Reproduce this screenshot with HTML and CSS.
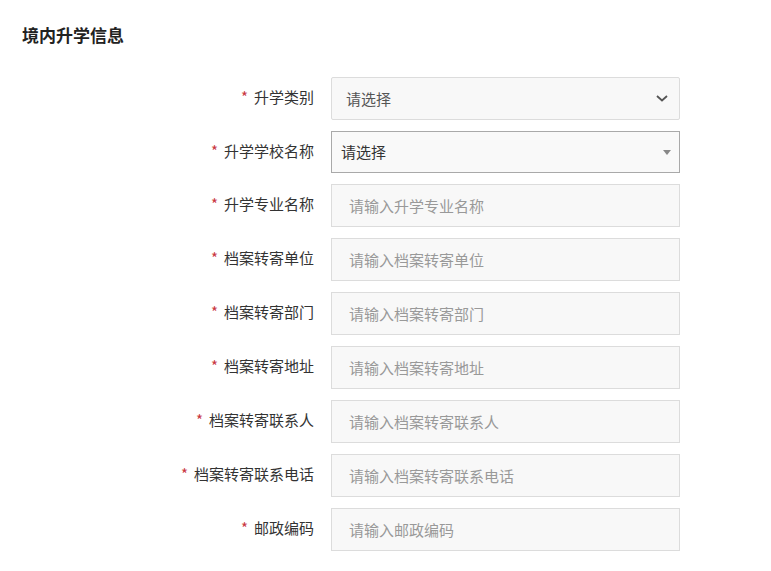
FILE: index.html
```
<!DOCTYPE html>
<html lang="zh-CN">
<head>
    <meta charset="UTF-8">
    <meta name="viewport" content="width=device-width, initial-scale=1.0">
    <title>境内升学信息</title>
    <link rel="stylesheet" href="styles.css">
</head>
<body>
    <div class="section">
        <h2 class="section-title">境内升学信息</h2>

        <form class="info-form">
            <div class="form-row">
                <label class="form-label"><span class="required">*</span>升学类别</label>
                <div class="field field-select">
                    <span class="field-value">请选择</span>
                    <svg class="chevron" width="12" height="7" viewBox="0 0 12 7">
                        <path d="M1 1 L6 5.5 L11 1" fill="none" stroke="#555" stroke-width="1.8"/>
                    </svg>
                </div>
            </div>

            <div class="form-row">
                <label class="form-label"><span class="required">*</span>升学学校名称</label>
                <div class="field field-combo">
                    <span class="field-value">请选择</span>
                    <span class="caret"></span>
                </div>
            </div>

            <div class="form-row">
                <label class="form-label"><span class="required">*</span>升学专业名称</label>
                <input class="field field-input" type="text" placeholder="请输入升学专业名称">
            </div>

            <div class="form-row">
                <label class="form-label"><span class="required">*</span>档案转寄单位</label>
                <input class="field field-input" type="text" placeholder="请输入档案转寄单位">
            </div>

            <div class="form-row">
                <label class="form-label"><span class="required">*</span>档案转寄部门</label>
                <input class="field field-input" type="text" placeholder="请输入档案转寄部门">
            </div>

            <div class="form-row">
                <label class="form-label"><span class="required">*</span>档案转寄地址</label>
                <input class="field field-input" type="text" placeholder="请输入档案转寄地址">
            </div>

            <div class="form-row">
                <label class="form-label"><span class="required">*</span>档案转寄联系人</label>
                <input class="field field-input" type="text" placeholder="请输入档案转寄联系人">
            </div>

            <div class="form-row">
                <label class="form-label"><span class="required">*</span>档案转寄联系电话</label>
                <input class="field field-input" type="text" placeholder="请输入档案转寄联系电话">
            </div>

            <div class="form-row">
                <label class="form-label"><span class="required">*</span>邮政编码</label>
                <input class="field field-input" type="text" placeholder="请输入邮政编码">
            </div>
        </form>
    </div>
</body>
</html>
```

FILE: styles.css
```
body {
    margin: 0;
    background-color: #fff;
    font-family: "Noto Sans CJK SC", "Noto Sans", sans-serif;
    color: #333;
}

.section {
    padding: 23px 0 0 0;
}

.section-title {
    margin: 0 0 0 22px;
    font-size: 17px;
    line-height: 24px;
    font-weight: bold;
    color: #222;
}

.info-form {
    margin-top: 30px;
    display: flex;
    flex-direction: column;
    gap: 11px;
}

.form-row {
    display: grid;
    grid-template-columns: 314px 349px;
    column-gap: 17px;
    align-items: center;
}

.form-label {
    text-align: right;
    font-size: 15px;
    line-height: 20px;
    color: #333;
    margin-top: -3px;
}

.required {
    color: #c9373f;
    margin-right: 6px;
}

.field {
    box-sizing: border-box;
    height: 43px;
    width: 349px;
    border: 1px solid #dcdcdc;
    background-color: #f8f8f8;
    font-family: inherit;
    font-size: 15px;
    color: #333;
}

.field-select {
    display: flex;
    align-items: center;
    justify-content: space-between;
    padding: 0 11px 0 14px;
    border-radius: 2px;
    color: #555;
}

.field-combo {
    display: flex;
    align-items: center;
    justify-content: space-between;
    height: 42px;
    padding: 0 8px 0 9px;
    border-color: #a9a9a9;
    background-color: #f9f9f9;
}

.field-value {
    line-height: 20px;
}

.caret {
    width: 0;
    height: 0;
    border-left: 4px solid transparent;
    border-right: 4px solid transparent;
    border-top: 5px solid #888;
}

.field-input {
    padding: 0 17px;
    outline: none;
}

.field-input::placeholder {
    color: #999;
}
```
